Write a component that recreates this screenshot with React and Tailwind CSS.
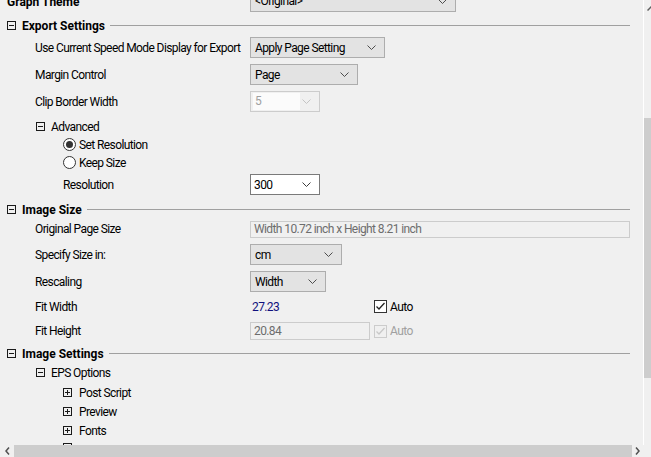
const FONT = { fontFamily: "Roboto, 'Liberation Sans', sans-serif" };

function Box({ open = true, className = "" }) {
  return (
    <svg width="9" height="9" viewBox="0 0 9 9" className={"shrink-0 " + className}>
      <rect x="0.5" y="0.5" width="8" height="8" fill="none" stroke="#1a1a1a" strokeWidth="1" />
      <line x1="2" y1="4.5" x2="7" y2="4.5" stroke="#1a1a1a" strokeWidth="1" />
      {!open && <line x1="4.5" y1="2" x2="4.5" y2="7" stroke="#1a1a1a" strokeWidth="1" />}
    </svg>
  );
}

function Chevron({ color = "#4d4d4d" }) {
  return (
    <svg width="9" height="5" viewBox="0 0 9 5" className="shrink-0">
      <polyline points="0.5,0.5 4.5,4.5 8.5,0.5" fill="none" stroke={color} strokeWidth="1" />
    </svg>
  );
}

function Combo({ text, w, variant = "normal" }) {
  if (variant === "white") {
    return (
      <div className={`flex items-center h-[21px] border border-[#7a7a7a] bg-white pl-[3px] pr-[8px] ${w}`}>
        <span className="flex-1 text-black">{text}</span>
        <Chevron color="#3c3c3c" />
      </div>
    );
  }
  if (variant === "disabled") {
    return (
      <div className={`flex items-center h-[21px] border border-[#cccccc] pl-[2px] pr-[8px] ${w}`}>
        <span className="h-[17px] w-[47px] bg-[#fbfbfb] pl-[2px] leading-[17px] text-[#a0a0a0]">{text}</span>
        <span className="flex-1" />
        <Chevron color="#c4c4c4" />
      </div>
    );
  }
  return (
    <div className={`flex items-center h-[21px] border border-[#adadad] bg-[#e3e3e3] pl-[4px] pr-[8px] ${w}`}>
      <span className="flex-1 text-black">{text}</span>
      <Chevron />
    </div>
  );
}

function Header({ title, mt, lineStart }) {
  return (
    <div className={`flex items-center h-[17px] ${mt}`}>
      <Box className="ml-[7px]" />
      <span className="ml-[6px] font-bold tracking-[0px] text-[12px] text-black">{title}</span>
      <div className="ml-[5px] mr-[13px] h-px flex-1 bg-[#a0a0a0]" />
    </div>
  );
}

function Row({ label, mt, h = "h-[21px]", indent = "pl-[35px]", children }) {
  return (
    <div className={`flex items-center ${h} ${mt} ${indent}`}>
      <span className="w-[215px] shrink-0 text-black">{label}</span>
      {children}
    </div>
  );
}

function Radio({ checked }) {
  return (
    <svg width="13" height="13" viewBox="0 0 13 13" className="shrink-0">
      <circle cx="6.5" cy="6.5" r="6" fill="#fff" stroke="#333" strokeWidth="1" />
      {checked && <circle cx="6.5" cy="6.5" r="3.5" fill="#333" />}
    </svg>
  );
}

function Check({ disabled }) {
  const c = disabled ? "#cccccc" : "#333333";
  return (
    <svg width="13" height="13" viewBox="0 0 13 13" className="shrink-0">
      <rect x="0.5" y="0.5" width="12" height="12" fill={disabled ? "none" : "#fff"} stroke={c} strokeWidth="1" />
      <polyline points="2.5,6.5 5,9 10.5,3" fill="none" stroke={disabled ? "#c8c8c8" : "#222"} strokeWidth="1.3" />
    </svg>
  );
}

export default function App() {
  return (
    <div
      className="flex flex-col w-[651px] h-[457px] overflow-hidden bg-[#f0f0f0] text-[12px] tracking-[-0.6px] text-black"
      style={FONT}
    >
      <div className="flex flex-1 min-h-0">
        <div className="flex-1 min-w-0 overflow-hidden flex flex-col">
          {/* Graph Theme (cut off) */}
          <div className="flex items-center h-[22px] -mt-[10px] shrink-0">
            <span className="ml-[7px] w-[243px] font-bold tracking-[0px] mt-[2px]">Graph Theme</span>
            <div className="flex items-center h-[21px] w-[206px] border border-[#adadad] bg-[#e3e3e3] pl-[4px] pr-[8px]">
              <span className="flex-1">&lt;Original&gt;</span>
              <Chevron />
            </div>
          </div>

          <Header title="Export Settings" mt="mt-[5px]" />
          <Row label="Use Current Speed Mode Display for Export" mt="mt-[3px]">
            <Combo text="Apply Page Setting" w="w-[135px]" />
          </Row>
          <Row label="Margin Control" mt="mt-[6px]">
            <Combo text="Page" w="w-[108px]" />
          </Row>
          <Row label="Clip Border Width" mt="mt-[6px]">
            <Combo text="5" w="w-[70px]" variant="disabled" />
          </Row>

          <div className="flex items-center h-[17px] mt-[6px] pl-[36px]">
            <Box />
            <span className="ml-[6px]">Advanced</span>
          </div>
          <div className="flex items-center h-[17px] mt-[1px] pl-[63px]">
            <Radio checked />
            <span className="ml-[3px]">Set Resolution</span>
          </div>
          <div className="flex items-center h-[17px] mt-[1px] pl-[63px]">
            <Radio />
            <span className="ml-[3px]">Keep Size</span>
          </div>
          <Row label="Resolution" mt="mt-[3px]" indent="pl-[63px]">
            <span className="-ml-[28px]" />
            <Combo text="300" w="w-[70px]" variant="white" />
          </Row>

          <Header title="Image Size" mt="mt-[6px]" />
          <Row label="Original Page Size" mt="mt-[2px]" h="h-[18px]">
            <div className="flex items-center h-[17px] flex-1 mr-[13px] border border-[#cccccc] pl-[3px] text-[#6d6d6d]">
              Width 10.72 inch x Height 8.21 inch
            </div>
          </Row>
          <Row label="Specify Size in:" mt="mt-[6px]">
            <Combo text="cm" w="w-[92px]" />
          </Row>
          <Row label="Rescaling" mt="mt-[6px]">
            <Combo text="Width" w="w-[76px]" />
          </Row>
          <Row label="Fit Width" mt="mt-[6px]" h="h-[17px]">
            <span className="w-[124px] pl-[2px] text-[#10107e]">27.23</span>
            <Check />
            <span className="ml-[3px]">Auto</span>
          </Row>
          <Row label="Fit Height" mt="mt-[7px]" h="h-[18px]">
            <div className="flex items-center h-[18px] w-[120px] border border-[#cccccc] pl-[3px] text-[#6d6d6d]">20.84</div>
            <span className="w-[4px]" />
            <Check disabled />
            <span className="ml-[3px] text-[#a0a0a0]">Auto</span>
          </Row>

          <Header title="Image Settings" mt="mt-[5px]" />
          <div className="flex items-center h-[17px] mt-[2px] pl-[36px]">
            <Box />
            <span className="ml-[6px]">EPS Options</span>
          </div>
          {["Post Script", "Preview", "Fonts"].map((t, i) => (
            <div key={t} className={`flex items-center h-[17px] ${i === 0 ? "mt-[3px]" : "mt-[2px]"} pl-[63px]`}>
              <Box open={false} />
              <span className="ml-[7px]">{t}</span>
            </div>
          ))}
          <div className="flex items-start h-[17px] mt-[4px] pl-[63px]">
            <Box open={false} />
          </div>
        </div>

        {/* vertical scrollbar (cut off) */}
        <div className="flex flex-col w-[8px] shrink-0 border-l border-white bg-[#f0f0f0]">
          <div className="h-[118px] pl-[3px] pt-[6px]">
            <svg width="5" height="5" viewBox="0 0 5 5">
              <polyline points="0.5,4.5 4.5,0.5" fill="none" stroke="#606060" strokeWidth="1.5" />
            </svg>
          </div>
          <div className="h-[260px] bg-[#cdcdcd]" />
          <div className="flex-1" />
        </div>
      </div>

      {/* horizontal scrollbar */}
      <div className="flex items-center h-[12px] shrink-0 bg-[#f0f0f0]">
        <div className="flex items-center justify-center w-[14px] h-full text-[#606060]">
          <svg width="5" height="8" viewBox="0 0 5 8">
            <polyline points="4,0.5 1,4 4,7.5" fill="none" stroke="#505050" strokeWidth="1.5" />
          </svg>
        </div>
        <div className="w-[618px] h-full bg-[#cdcdcd]" />
        <div className="flex items-center justify-center w-[10px] h-full">
          <svg width="5" height="8" viewBox="0 0 5 8">
            <polyline points="1,0.5 4,4 1,7.5" fill="none" stroke="#505050" strokeWidth="1.5" />
          </svg>
        </div>
        <div className="flex-1" />
      </div>
    </div>
  );
}
